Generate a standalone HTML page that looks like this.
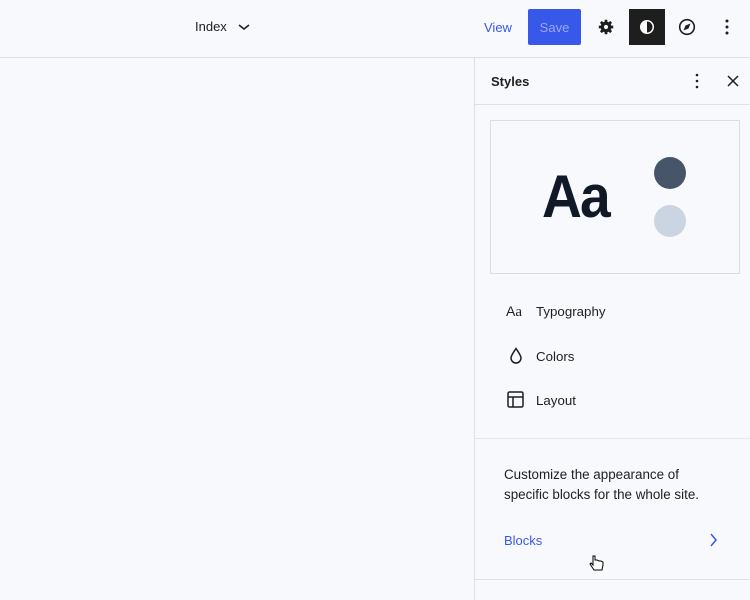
<!DOCTYPE html>
<html><head><style>
*{margin:0;padding:0;box-sizing:border-box}
body{width:750px;height:600px;background:#f8f9fc;font-family:"Liberation Sans",sans-serif;color:#1e1e1e;position:relative;overflow:hidden;font-size:13px}
.a{position:absolute}
</style></head><body>
<div class="a" style="left:0;top:57px;width:750px;height:1px;background:#e0e0e0"></div>
<div class="a" style="left:195px;top:19px;font-size:13px">Index</div>
<svg class="a" style="left:237px;top:22px" width="14" height="10"><path d="M2 3l5 4 5-4" stroke="#1e1e1e" stroke-width="1.6" fill="none"/></svg>
<div class="a" style="left:484px;top:20px;color:#3858e9">View</div>
<div class="a" style="left:528px;top:9px;width:53px;height:36px;background:#3858e9;border-radius:2px;color:#9aa8f0;text-align:center;line-height:37px">Save</div>
<svg class="a" style="left:597px;top:18px" width="18" height="18" viewBox="0 0 20 20"><g fill="#1e1e1e"><circle cx="10" cy="10" r="6"/><g stroke="#1e1e1e" stroke-width="3"><path d="M10 2v16M2 10h16M4.3 4.3l11.4 11.4M15.7 4.3L4.3 15.7"/></g></g><circle cx="10" cy="10" r="2.3" fill="#f8f9fc"/></svg>
<div class="a" style="left:629px;top:9px;width:36px;height:36px;background:#1e1e1e"></div>
<svg class="a" style="left:637px;top:17px" width="20" height="20"><circle cx="10" cy="10" r="7" fill="#fff"/><path d="M10 4.5a5.5 5.5 0 0 1 0 11z" fill="#1e1e1e"/></svg>
<svg class="a" style="left:677px;top:17px" width="20" height="20"><circle cx="10" cy="10" r="7.3" stroke="#1e1e1e" stroke-width="1.6" fill="none"/><path d="M13.5 6.5l-2 5-5 2 2-5z" fill="#1e1e1e"/></svg>
<svg class="a" style="left:720px;top:17px" width="14" height="20"><g fill="#1e1e1e"><circle cx="7" cy="4" r="1.5"/><circle cx="7" cy="10" r="1.5"/><circle cx="7" cy="16" r="1.5"/></g></svg>
<div class="a" style="left:474px;top:57px;width:1px;height:543px;background:#e0e0e0"></div>
<div class="a" style="left:491px;top:74px;font-weight:bold">Styles</div>
<svg class="a" style="left:690px;top:72px" width="14" height="20"><g fill="#1e1e1e"><circle cx="7" cy="3" r="1.3"/><circle cx="7" cy="9" r="1.3"/><circle cx="7" cy="15" r="1.3"/></g></svg>
<svg class="a" style="left:726px;top:74px" width="14" height="14"><path d="M2 2l10 10M12 2L2 12" stroke="#1e1e1e" stroke-width="1.5"/></svg>
<div class="a" style="left:475px;top:104px;width:275px;height:1px;background:#e0e0e0"></div>
<div class="a" style="left:490px;top:120px;width:250px;height:154px;border:1px solid #ddd;background:#f8f9fc"></div>
<div class="a" style="left:542px;top:162px;font-size:60px;font-weight:bold;color:#111827;letter-spacing:-2px;line-height:70px;transform:scaleX(0.92);transform-origin:left">Aa</div>
<div class="a" style="left:654px;top:157px;width:32px;height:32px;border-radius:50%;background:#475569"></div>
<div class="a" style="left:654px;top:205px;width:32px;height:32px;border-radius:50%;background:#cbd5e1"></div>
<div class="a" style="left:506px;top:303px;font-size:14px">A<span style="font-family:'Liberation Serif',serif;font-size:15px">a</span></div>
<div class="a" style="left:536px;top:304px;font-size:13.3px">Typography</div>
<svg class="a" style="left:507px;top:346px" width="18" height="20"><path d="M9 2.5C6 7 4 9.5 4 12a5 5 0 0 0 10 0c0-2.5-2-5-5-9.5z" stroke="#1e1e1e" stroke-width="1.5" fill="none"/></svg>
<div class="a" style="left:536px;top:349px;font-size:13.3px">Colors</div>
<svg class="a" style="left:507px;top:391px" width="18" height="18"><rect x="1" y="1" width="15" height="15" rx="1.5" stroke="#1e1e1e" stroke-width="1.5" fill="none"/><path d="M1 6h15M6 6v10" stroke="#1e1e1e" stroke-width="1.5"/></svg>
<div class="a" style="left:536px;top:393px;font-size:13.3px">Layout</div>
<div class="a" style="left:475px;top:438px;width:275px;height:1px;background:#e6e6e6"></div>
<div class="a" style="left:504px;top:465px;line-height:20px;font-size:13.4px">Customize the appearance of<br>specific blocks for the whole site.</div>
<div class="a" style="left:504px;top:533px;color:#3858e9">Blocks</div>
<svg class="a" style="left:708px;top:532px" width="12" height="16"><path d="M3 2l5 6-5 6" stroke="#3858e9" stroke-width="1.5" fill="none"/></svg>
<svg class="a" style="left:588px;top:554px" width="18" height="20"><path d="M5 2v9l-2-2-1 1 4 6h8l1-5v-3l-2-1-2 0-2-1-2 0V2z" fill="#fff" stroke="#000" stroke-width="1"/></svg>
<div class="a" style="left:475px;top:579px;width:275px;height:1px;background:#e0e0e0"></div>
</body></html>
